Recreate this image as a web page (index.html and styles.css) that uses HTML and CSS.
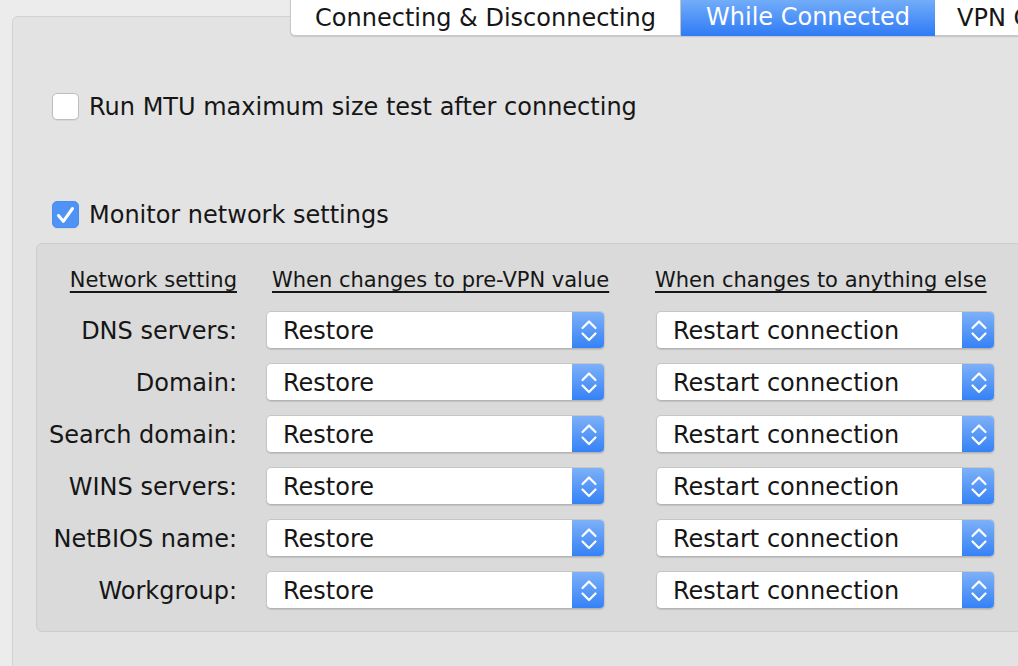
FILE: index.html
```html
<!DOCTYPE html>
<html>
<head>
<meta charset="utf-8">
<link rel="stylesheet" href="styles.css">
</head>
<body>
<div class="tabs">
  <div class="tab tab-first">Connecting &amp; Disconnecting</div>
  <div class="tab tab-active">While Connected</div>
  <div class="tab tab-last">VPN Credentials</div>
</div>
<div class="box">
  <div class="check check-mtu">
    <span class="cb"></span>
    <span class="check-label">Run MTU maximum size test after connecting</span>
  </div>
  <div class="check check-monitor">
    <span class="cb cb-on"><svg width="28" height="28" viewBox="0 0 28 28"><path d="M6.5 14.5 L11.3 20.3 L20.5 7.5" fill="none" stroke="#fff" stroke-width="3" stroke-linecap="round" stroke-linejoin="round"/></svg></span>
    <span class="check-label">Monitor network settings</span>
  </div>
  <div class="panel">
    <div class="grid" id="grid">
      <div class="hdr hdr1">Network setting</div>
      <div class="hdr hdr2">When changes to pre-VPN value</div>
      <div class="hdr hdr3">When changes to anything else</div>
    </div>
  </div>
</div>
<script>
  var labels = ["DNS servers:", "Domain:", "Search domain:", "WINS servers:", "NetBIOS name:", "Workgroup:"];
  var chev = '<svg width="33" height="38" viewBox="0 0 33 38"><path d="M10.5 17 L17 10.5 L23.5 17 M10.5 22.5 L17 29 L23.5 22.5" fill="none" stroke="#fff" stroke-width="2.2" stroke-linecap="round" stroke-linejoin="round"/></svg>';
  function popup(text, extra) {
    return '<div class="popup ' + extra + '"><span class="popup-text">' + text + '</span><span class="stepper">' + chev + '</span></div>';
  }
  var g = document.getElementById('grid');
  var html = '';
  labels.forEach(function (l) {
    html += '<div class="row-label">' + l + '</div>' + popup('Restore', 'pop2') + popup('Restart connection', 'pop3');
  });
  g.insertAdjacentHTML('beforeend', html);
</script>
</body>
</html>
```

FILE: styles.css
```css
html, body {
  margin: 0;
  padding: 0;
}
body {
  background: #ececec;
  width: 1018px;
  height: 666px;
  overflow: hidden;
  font-family: "DejaVu Sans", "Liberation Sans", sans-serif;
  color: #161616;
}
.tabs {
  position: relative;
  z-index: 2;
  display: flex;
  margin-left: 290px;
  margin-top: -3px;
  height: 39px;
  width: 900px;
}
.tab {
  box-sizing: border-box;
  height: 39px;
  padding-top: 2px;
  font-size: 24px;
  line-height: 36px;
  text-align: center;
  background: #fff;
  border: 1px solid #c8c8c8;
  border-left: none;
  box-shadow: 0 1px 1px rgba(0, 0, 0, 0.12);
  white-space: nowrap;
}
.tab-first {
  width: 391px;
  border-left: 1px solid #c8c8c8;
  border-bottom-left-radius: 5px;
}
.tab-active {
  width: 254px;
  color: #fff;
  border: none;
  background: linear-gradient(#78b1f9, #2f7bf6);
}
.tab-last {
  width: 240px;
  text-align: left;
  padding-left: 22px;
}
.box {
  box-sizing: border-box;
  margin-left: 12px;
  margin-top: -20px;
  width: 1100px;
  height: 700px;
  background: #e3e3e3;
  border: 1px solid #d2d2d2;
  border-radius: 6px;
  padding-top: 75px;
  padding-left: 23px;
}
.check {
  display: flex;
  align-items: center;
  height: 28px;
  margin-left: 16px;
}
.check-mtu {
  margin-bottom: 80px;
}
.check-monitor {
  margin-bottom: 15px;
}
.cb {
  box-sizing: border-box;
  width: 27px;
  height: 27px;
  background: #fff;
  border: 1px solid #bdbdbd;
  border-radius: 5px;
  box-shadow: 0 1px 0 rgba(0, 0, 0, 0.05);
  margin-right: 10px;
  flex: none;
}
.cb-on {
  background: #4f93f5;
  border-color: #4a8ef2;
}
.cb-on svg {
  display: block;
  margin: -1px 0 0 -1px;
}
.check-label {
  font-size: 24px;
  line-height: 28px;
  padding-top: 2px;
  white-space: nowrap;
}
.panel {
  box-sizing: border-box;
  width: 1100px;
  height: 389px;
  background: #dadada;
  border: 1px solid #cdcdcd;
  border-radius: 6px;
  padding-top: 23px;
  padding-left: 13px;
}
.grid {
  display: grid;
  grid-template-columns: 216px 390px 339px;
  grid-template-rows: 30px;
  grid-auto-rows: 38px;
  row-gap: 14px;
}
.hdr {
  align-self: start;
  font-size: 21px;
  line-height: 26px;
  text-decoration: underline;
  text-underline-offset: 4px;
  text-decoration-thickness: 1.5px;
  white-space: nowrap;
}
.hdr1 {
  text-align: right;
  padding-right: 29px;
}
.hdr2 {
  padding-left: 6px;
}
.hdr3 {
  margin-left: -1px;
}
.row-label {
  font-size: 24px;
  padding-right: 29px;
  padding-top: 2px;
  display: flex;
  align-items: center;
  justify-content: flex-end;
  white-space: nowrap;
}
.popup {
  box-sizing: border-box;
  width: 339px;
  height: 38px;
  display: flex;
  align-items: stretch;
  background: #fff;
  border: 1px solid #c6c6c6;
  border-bottom-color: #b4b4b4;
  border-radius: 5px;
  box-shadow: 0 1px 1px rgba(0, 0, 0, 0.12);
  overflow: hidden;
}
.popup-text {
  flex: 1;
  font-size: 24px;
  line-height: 38px;
  padding-left: 16px;
  white-space: nowrap;
}
.stepper {
  width: 33px;
  flex: none;
  margin: -1px -1px -1px 0;
  background: linear-gradient(#7fb2f8, #3380f6);
  border-radius: 0 5px 5px 0;
}
.stepper svg {
  display: block;
}
```
